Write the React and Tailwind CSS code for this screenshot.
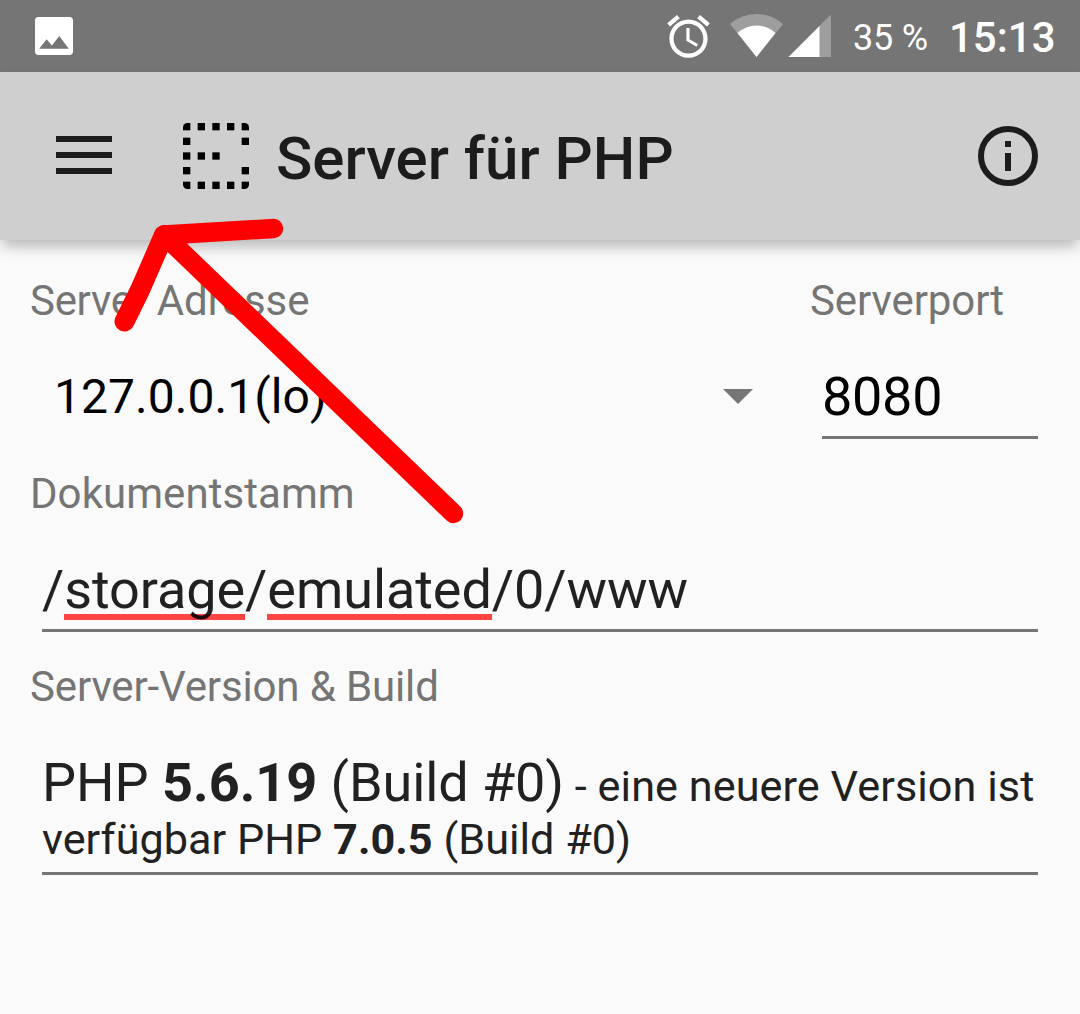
function FieldLabel({ children, className = '' }) {
  return <div className={`h-[50px] text-[42px] leading-[50px] text-[#757575] whitespace-nowrap ${className}`}>{children}</div>;
}

function StatusBar() {
  return (
    <div className="flex h-[72px] items-center bg-[#757575] pl-[35px] text-white">
      <svg className="block h-[38px] w-[38px]" viewBox="3 3 18 18" fill="white">
        <path d="M21 19.500V4.500c0-.83-.67-1.500-1.500-1.500H4.500C3.670 3 3 3.670 3 4.500v15c0 .83.67 1.500 1.500 1.500h15c.83 0 1.500-.67 1.500-1.500zM8.500 13.500l2.500 3.010L14.500 12l4.500 6H5l3.500-4.500z" />
      </svg>
      <svg className="ml-[590px] block h-[51px] w-[51px]" viewBox="0 0 24 24" fill="white">
        <path d="M22 5.72l-4.6-3.86-1.29 1.53 4.6 3.86L22 5.72zM7.88 3.39L6.6 1.86 2 5.71l1.29 1.53 4.59-3.85zM12.5 8H11v6l4.750 2.850.75-1.230-4-2.370V8zM12 4c-4.970 0-9 4.030-9 9s4.020 9 9 9 9-4.030 9-9-4.030-9-9-9zm0 16c-3.870 0-7-3.130-7-7s3.130-7 7-7 7 3.130 7 7-3.130 7-7 7z" />
      </svg>
      <svg className="ml-4 block h-11 w-[53px]" viewBox="0 0 53 44" fill="white">
        <path d="M26.500 43L0 10Q11.500 0 26.500 0T53 10Z" fillOpacity=".3" />
        <path d="M26.500 43L7.500 19Q16 11.500 26.500 11.500T45.500 19Z" />
      </svg>
      <svg className="ml-[5px] block h-11 w-[43px]" viewBox="0 0 43 44" fill="white">
        <path d="M0.500 43L43 0.500V43Z" fillOpacity=".3" />
        <path d="M0.500 43L31.500 12V43Z" />
      </svg>
      <span className="ml-[22px] mt-1 w-[96px] whitespace-nowrap text-[36px] leading-[44px] tracking-[-0.2px]">35 %</span>
      <span className="mt-1 whitespace-nowrap text-[42px] font-medium leading-[50px]">15:13</span>
    </div>
  );
}

const DOTS = [
  [0, 1, 2, 3, 4],
  [0, 4],
  [0, 1, 2],
  [0, 4],
  [0, 1, 2, 3, 4],
];

function AppBar() {
  return (
    <header className="relative z-10 flex h-[168px] items-center bg-[#cfcfcf] pl-14 pr-[42px] text-[#1c1c1c] shadow-[0_8px_14px_-2px_rgba(0,0,0,0.28)]">
      <div className="mb-0.5 flex w-14 flex-col gap-2.5">
        <div className="h-1.5 bg-[#1c1c1c]" />
        <div className="h-1.5 bg-[#1c1c1c]" />
        <div className="h-1.5 bg-[#1c1c1c]" />
      </div>
      <svg className="ml-[71px] block h-[66px] w-[66px]" viewBox="0 0 18 18" fill="black">
        <defs>
          <clipPath id="rounded">
            <rect width="18" height="18" rx="1.2" />
          </clipPath>
        </defs>
        <g clipPath="url(#rounded)">
          {DOTS.map((cols, row) => cols.map((c) => <rect key={`${row}-${c}`} x={c * 4} y={row * 4} width="2" height="2" />))}
        </g>
      </svg>
      <h1 className="ml-[27px] mt-1.5 whitespace-nowrap text-[60px] font-medium leading-[70px]">Server für PHP</h1>
      <svg className="ml-auto block h-[60px] w-[60px]" viewBox="0 0 60 60" fill="#1c1c1c">
        <circle cx="30" cy="30" r="27" fill="none" stroke="#1c1c1c" strokeWidth="6" />
        <rect x="27" y="15" width="6" height="6" />
        <rect x="27" y="27" width="6" height="18" />
      </svg>
    </header>
  );
}

export default function App() {
  return (
    <div className="relative h-[1014px] w-[1080px] overflow-hidden bg-[#fafafa] font-['Roboto',sans-serif]">
      <StatusBar />
      <AppBar />
      <main className="pl-[30px] pr-[42px] pt-9">
        <div className="flex">
          <div className="w-[780px]">
            <FieldLabel>
              <span className="tracking-[-0.3px]">Server </span>Adresse
            </FieldLabel>
            <div className="flex h-[141px] items-center justify-between pl-[24px] pr-[57px]">
              <span className="text-[48px] leading-[57px] tracking-[0.06px] text-black">127.0.0.1(lo)</span>
              <svg className="block h-[15px] w-[30px]" viewBox="0 0 30 15">
                <path d="M0 0H30L15 15Z" fill="#757575" />
              </svg>
            </div>
          </div>
          <div className="flex-1">
            <FieldLabel className="tracking-[-0.1px]">Serverport</FieldLabel>
            <div className="ml-3 h-[113px] border-b-[3px] border-[#757575] pt-[39px] text-[54px] leading-[63px] tracking-[-0.3px] text-black">8080</div>
          </div>
        </div>

        <FieldLabel className="mt-0.5 tracking-[0.06px]">Dokumentstamm</FieldLabel>
        <div className="ml-3 flex h-[113px] border-b-[3px] border-[#757575] pt-[39px] text-[54px] leading-[63px] tracking-[-0.07px] text-black/87">
          <span>/</span>
          <span className="h-[62px] shadow-[inset_0_-6px_0_#ff4444]">storage</span>
          <span>/</span>
          <span className="h-[62px] shadow-[inset_0_-6px_0_#ff4444]">emulated</span>
          <span>/0/www</span>
        </div>

        <FieldLabel className="mt-[30px] tracking-[-0.14px]">Server-Version &amp; Build</FieldLabel>
        <div className="ml-3 h-[163px] whitespace-nowrap border-b-[3px] border-[#757575] pt-[39px] text-[#212121]">
          <div className="flex h-16 items-baseline whitespace-pre text-[54px] leading-[63px]">
            <span>PHP </span>
            <b>5.6.19</b>
            <span className="tracking-[-0.1px]"> (Build #0)</span>
            <span className="text-[43.2px] leading-[50px] tracking-[0.07px]"> - eine neuere Version ist</span>
          </div>
          <div className="text-[43.2px] leading-[50px] tracking-[0.03px]">
            verfügbar PHP <b>7.0.5</b> (Build #0)
          </div>
        </div>
      </main>
      <svg className="pointer-events-none absolute left-0 top-0 z-20 h-[1014px] w-[1080px]" viewBox="0 0 1080 1014" fill="none" stroke="#ff0000" strokeWidth="19.500" strokeLinecap="round" strokeLinejoin="round">
        <path d="M273.500 228.500L164 235L453.500 513.500" />
        <path d="M164 235L140 290L124.500 321.500" strokeWidth="20" />
      </svg>
    </div>
  );
}
